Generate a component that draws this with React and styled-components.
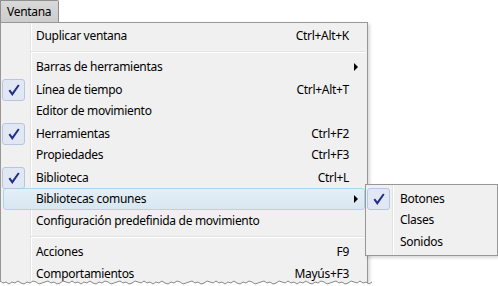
import React from "react";
import styled, { createGlobalStyle } from "styled-components";

const Global = createGlobalStyle`
  html, body { margin: 0; padding: 0; background: #ffffff; }
  body { font-family: "Noto Sans", "Open Sans", sans-serif; font-size: 12px; letter-spacing: -0.3px; color: #000; }
  * { box-sizing: border-box; }
`;

const Page = styled.div`
  position: relative;
  width: 498px;
  height: 286px;
  overflow: hidden;
`;

const MenuBar = styled.div`
  display: flex;
  height: 22px;
`;

const BarButton = styled.div`
  width: 59px;
  height: 22px;
  padding: 2px 0 0 6px;
  border: 1px solid #8e8f8f;
  border-bottom: none;
  border-radius: 0 2px 0 0;
  background: linear-gradient(#d9d9d9, #cdcdcd);
  line-height: 18px;
`;

const MainMenu = styled.div`
  width: 368px;
  height: 270px;
  border: 1px solid #979797;
  padding: 2px;
  background:
    linear-gradient(to right, transparent 29px, #e2e3e3 29px, #e2e3e3 30px, #ffffff 30px, #ffffff 31px, transparent 31px),
    #f0f0f0;
  box-shadow: 2px 2px 3px rgba(0, 0, 0, 0.15);
`;

const SubMenu = styled(MainMenu)`
  position: absolute;
  left: 365px;
  top: 184px;
  width: 133px;
  height: auto;
  background:
    linear-gradient(to right, transparent 26px, #e2e3e3 26px, #e2e3e3 27px, #ffffff 27px, #ffffff 28px, transparent 28px),
    #f0f0f0;
`;

const Row = styled.div`
  display: grid;
  grid-template-columns: ${(p) => p.$gutter || 32}px 1fr auto 15px;
  align-items: center;
  height: 22px;
  border: 1px solid ${(p) => (p.$active ? "#a8d8ea" : "transparent")};
  border-radius: 3px;
  background: ${(p) => (p.$active ? "linear-gradient(#e4eff7, #d8e7f1)" : "transparent")};
  white-space: nowrap;
`;

const CheckBox = styled.div`
  width: 23px;
  height: 22px;
  margin-left: -2px;
  border: 1px solid #b7c4e2;
  border-radius: 3px;
  background: #e2e8f3;
  display: flex;
  align-items: center;
  justify-content: center;
`;

const Label = styled.span`
  grid-column: 2;
  padding-bottom: 1px;
`;

const Shortcut = styled.span`
  grid-column: 3;
  text-align: right;
  padding-bottom: 1px;
`;

const Arrow = styled.span`
  grid-column: 4;
  width: 0;
  height: 0;
  margin-left: 5px;
  border-top: 4px solid transparent;
  border-bottom: 4px solid transparent;
  border-left: 4px solid #000;
`;

const Separator = styled.div`
  height: 9px;
  margin-left: 28px;
  padding-top: 4px;
  &::before {
    content: "";
    display: block;
    height: 1px;
    background: #e2e3e3;
    border-bottom: 1px solid #ffffff;
    box-sizing: content-box;
  }
`;

const Torn = styled.svg`
  position: absolute;
  left: 0;
  top: 278px;
`;

const Check = () => (
  <svg width="12" height="12" viewBox="0 0 12 12">
    <path d="M1.3 6.2 L4.3 10.2 L10.8 1" fill="none" stroke="#1f2f8c" strokeWidth="2" strokeLinejoin="miter" />
  </svg>
);

const mainItems = [
  { label: "Duplicar ventana", shortcut: "Ctrl+Alt+K" },
  { sep: true },
  { label: "Barras de herramientas", sub: true },
  { label: "Línea de tiempo", shortcut: "Ctrl+Alt+T", checked: true },
  { label: "Editor de movimiento" },
  { label: "Herramientas", shortcut: "Ctrl+F2", checked: true },
  { label: "Propiedades", shortcut: "Ctrl+F3" },
  { label: "Biblioteca", shortcut: "Ctrl+L", checked: true },
  { label: "Bibliotecas comunes", sub: true, active: true },
  { label: "Configuración predefinida de movimiento" },
  { sep: true },
  { label: "Acciones", shortcut: "F9" },
  { label: "Comportamientos", shortcut: "Mayús+F3" },
];

const subItems = [
  { label: "Botones", checked: true },
  { label: "Clases" },
  { label: "Sonidos" },
];

function renderItems(items, gutter) {
  return items.map((it, i) =>
    it.sep ? (
      <Separator key={i} />
    ) : (
      <Row key={i} $active={it.active} $gutter={gutter}>
        {it.checked ? (
          <CheckBox>
            <Check />
          </CheckBox>
        ) : (
          <span />
        )}
        <Label>{it.label}</Label>
        {it.shortcut ? <Shortcut>{it.shortcut}</Shortcut> : null}
        {it.sub ? <Arrow /> : null}
      </Row>
    )
  );
}

const tornPoints = (() => {
  const ys = [3, 5, 4, 6, 4, 5, 3, 5, 6, 4, 5, 3, 4, 6, 5, 4, 3, 5, 4, 6, 5, 3, 4, 5];
  const pts = [];
  for (let x = 0, i = 0; x <= 372; x += 3, i++) {
    pts.push(`${x},${ys[i % ys.length]}`);
  }
  return pts.join(" ");
})();

export default function App() {
  return (
    <Page>
      <Global />
      <MenuBar>
        <BarButton>Ventana</BarButton>
      </MenuBar>
      <MainMenu>{renderItems(mainItems, 32)}</MainMenu>
      <SubMenu>{renderItems(subItems, 31)}</SubMenu>
      <Torn width="372" height="8" viewBox="0 0 372 8">
        <polygon points={`0,8 ${tornPoints} 372,8`} fill="#ffffff" />
        <polyline points={tornPoints} fill="none" stroke="#8a8a8a" strokeWidth="1" />
      </Torn>
    </Page>
  );
}
